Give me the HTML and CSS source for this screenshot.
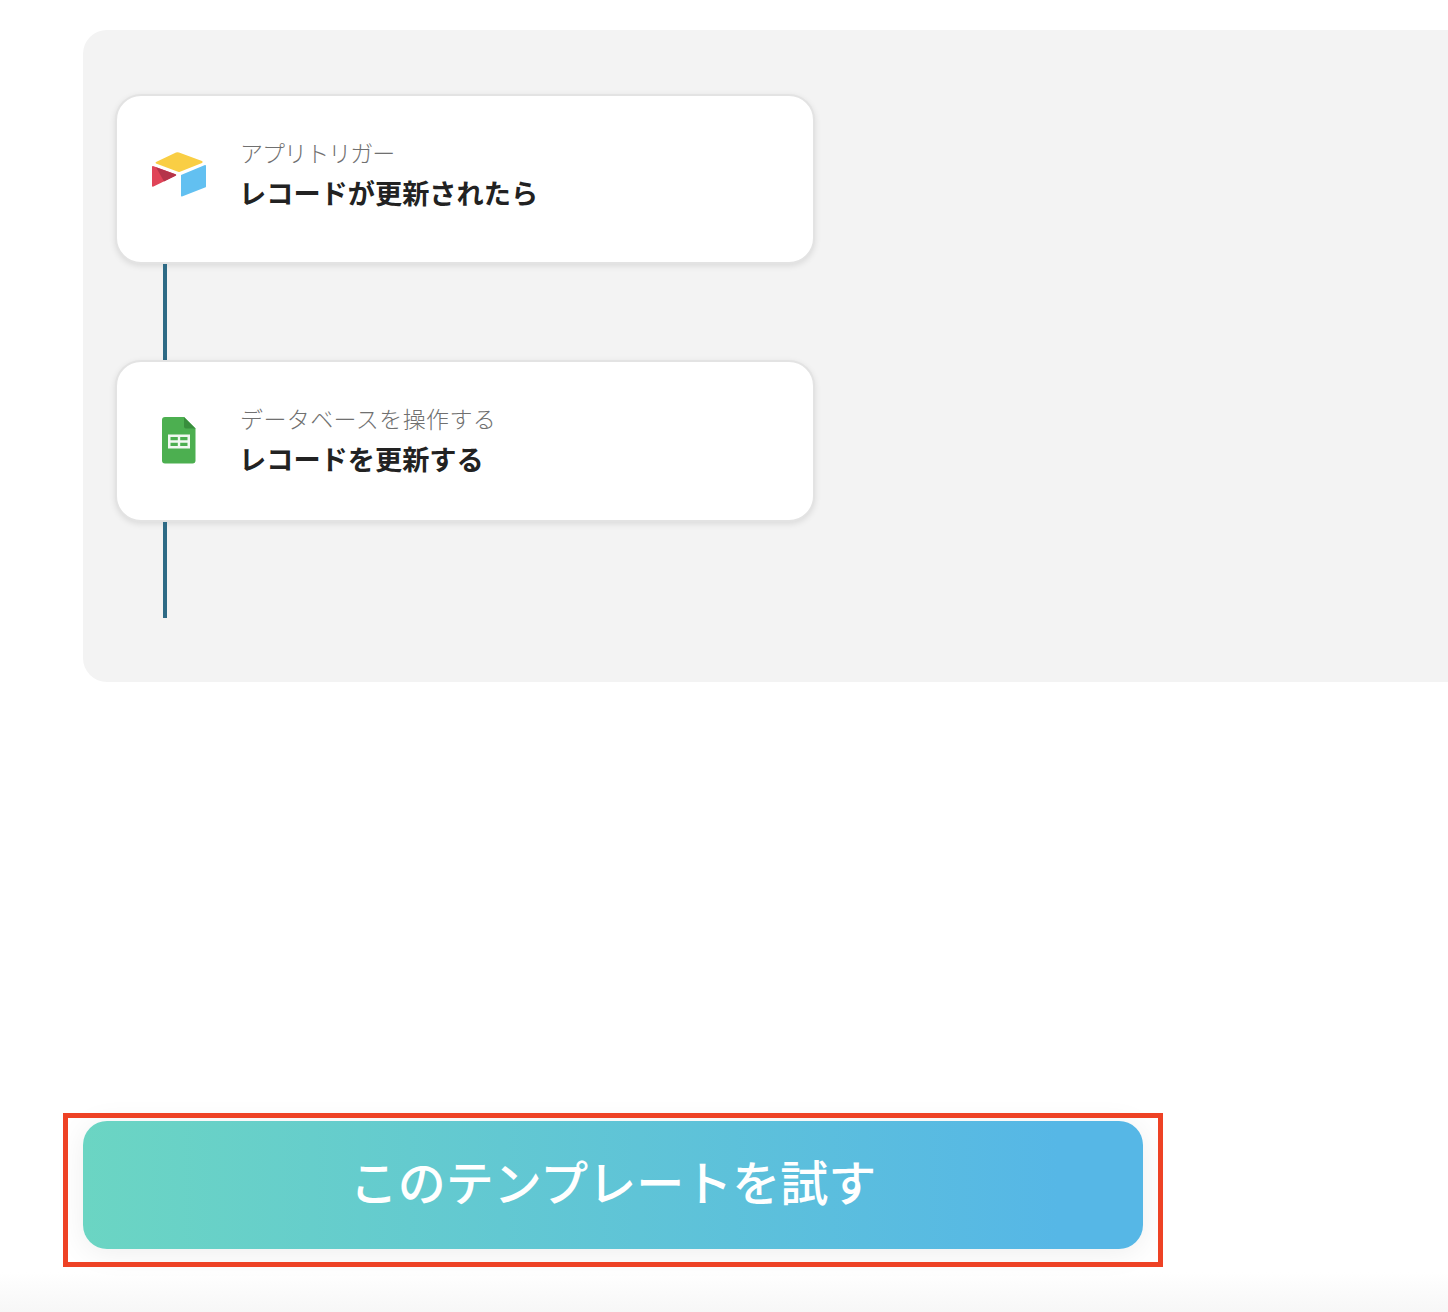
FILE: index.html
```html
<!DOCTYPE html>
<html lang="ja">
<head>
    <meta charset="UTF-8">
    <meta name="viewport" content="width=device-width, initial-scale=1.0">
    <title>このテンプレートを試す</title>
    <link rel="stylesheet" href="styles.css">
</head>
<body>
    <div class="wrapper">
        <div class="flow">
            <div class="card card-trigger">
                <div class="card-icon">
                    <svg width="54" height="46" viewBox="0 0 54 46">
                        <path d="M4 11 L24 1.5 Q25.5 1 27 1.5 L50 10 Q51.5 11 50 12 L28 20.8 Q27 21.2 26 20.8 L4 12.5 Q3 11.7 4 11Z" fill="#f9ce44"/>
                        <path d="M29 24 L53 14 Q54 13.8 54 15 V35.5 Q54 36.3 53 36.6 L30 45.5 Q29 45.8 29 44.8Z" fill="#62c0f1"/>
                        <path d="M1 15 L23.5 23.3 Q25 24 23.5 24.8 L1.5 35.6 Q0 36 0 35 V15.8 Q0 14.8 1 15Z" fill="#e04458"/>
                        <path d="M4 16.2 L23.5 23.3 Q25 24 23.5 24.8 L12 30.4Z" fill="#b5344a"/>
                    </svg>
                </div>
                <div class="card-text">
                    <p class="card-label card-label-tight">アプリトリガー</p>
                    <p class="card-title">レコードが更新されたら</p>
                </div>
            </div>
            <div class="line"></div>
            <div class="card card-action">
                <div class="card-icon">
                    <svg width="34" height="47" viewBox="0 0 34 47">
                        <path d="M3 0 H22 L33.5 11.5 V43.5 Q33.5 46.5 30.5 46.5 H3 Q0 46.5 0 43.5 V3 Q0 0 3 0Z" fill="#4caf50"/>
                        <path d="M22 0 L33.5 11.5 H24 Q22 11.5 22 9.5Z" fill="#388e3c"/>
                        <path d="M6 17.5 H28 V31.5 H6Z M8.5 20 V23.2 H15.8 V20Z M18.2 20 V23.2 H25.5 V20Z M8.5 25.7 V29 H15.8 V25.7Z M18.2 25.7 V29 H25.5 V25.7Z" fill="#f1f8f1" fill-rule="evenodd"/>
                    </svg>
                </div>
                <div class="card-text">
                    <p class="card-label card-label-wide">データベースを操作する</p>
                    <p class="card-title">レコードを更新する</p>
                </div>
            </div>
            <div class="line"></div>
        </div>
        <div class="cta-frame">
            <button class="cta">このテンプレートを試す</button>
        </div>
    </div>
    <div class="bottom-fade"></div>
</body>
</html>
```

FILE: styles.css
```css
*
{
    margin: 0;
    padding: 0;
    box-sizing: border-box;
}
html, body
{
    height: 1312px;
    overflow: hidden;
    background-color: white;
}
body
{
    font-family: "Noto Sans CJK JP", "Noto Sans", sans-serif;
    position: relative;
}
.wrapper
{
    width: 100%;
    padding-top: 30px;
}
.flow
{
    margin-left: 83px;
    height: 652px;
    padding: 64px 32px 0;
    background-color: #f3f3f3;
    border-radius: 24px 0 0 24px;
}
.card
{
    width: 700px;
    display: flex;
    align-items: flex-start;
    gap: 34px;
    padding: 41px 35px 0;
    background-color: white;
    border: 2px solid #e3e3e3;
    border-radius: 26px;
    box-shadow: 0 2px 6px rgba(0, 0, 0, 0.1);
}
.card-trigger
{
    height: 170px;
}
.card-action
{
    height: 162px;
}
.card-icon
{
    width: 54px;
    height: 48px;
    flex-shrink: 0;
    display: flex;
    justify-content: center;
    margin-top: 14px;
}
.card-label
{
    margin-top: -1px;
    font-size: 23px;
    font-weight: 300;
    line-height: 32px;
    color: #707070;
}
.card-label-tight
{
    letter-spacing: -0.95px;
}
.card-label-wide
{
    letter-spacing: 0.4px;
}
.card-title
{
    margin-top: 8px;
    margin-left: -1px;
    font-size: 27.2px;
    font-weight: 700;
    line-height: 32px;
    color: #222222;
}
.line
{
    width: 4px;
    height: 96px;
    margin-left: 48px;
    background-color: #2d6a85;
}
.cta-frame
{
    position: relative;
    width: 1100px;
    margin: 431px 0 0 63px;
    padding: 8px 20px 18px;
}
.cta-frame::after
{
    content: "";
    position: absolute;
    inset: 0;
    border: 5px solid #ee4225;
}
.cta
{
    display: block;
    width: 100%;
    height: 128px;
    padding-bottom: 10px;
    border: none;
    border-radius: 24px;
    background: linear-gradient(90deg, #6bd5c3 0%, #56b7e6 92%);
    box-shadow: 0 4px 30px rgba(0, 0, 0, 0.07);
    color: white;
    font-family: inherit;
    font-size: 48px;
    font-weight: 500;
}
.bottom-fade
{
    position: absolute;
    left: 0;
    right: 0;
    bottom: 0;
    height: 40px;
    background: linear-gradient(180deg, rgba(247, 247, 247, 0), #f7f7f7);
}
```
